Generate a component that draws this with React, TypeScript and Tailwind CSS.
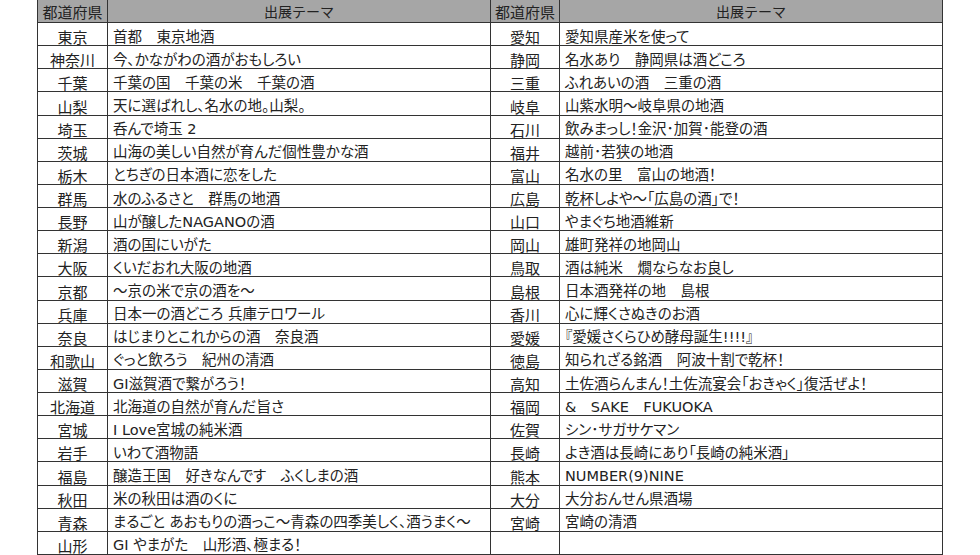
import React from "react";

const left: [string, string][] = [
  ["東京", "首都　東京地酒"],
  ["神奈川", "今、かながわの酒がおもしろい"],
  ["千葉", "千葉の国　千葉の米　千葉の酒"],
  ["山梨", "天に選ばれし、名水の地。山梨。"],
  ["埼玉", "呑んで埼玉 2"],
  ["茨城", "山海の美しい自然が育んだ個性豊かな酒"],
  ["栃木", "とちぎの日本酒に恋をした"],
  ["群馬", "水のふるさと　群馬の地酒"],
  ["長野", "山が醸したNAGANOの酒"],
  ["新潟", "酒の国にいがた"],
  ["大阪", "くいだおれ大阪の地酒"],
  ["京都", "～京の米で京の酒を～"],
  ["兵庫", "日本一の酒どころ 兵庫テロワール"],
  ["奈良", "はじまりとこれからの酒　奈良酒"],
  ["和歌山", "ぐっと飲ろう　紀州の清酒"],
  ["滋賀", "GI滋賀酒で繋がろう！"],
  ["北海道", "北海道の自然が育んだ旨さ"],
  ["宮城", "I Love宮城の純米酒"],
  ["岩手", "いわて酒物語"],
  ["福島", "醸造王国　好きなんです　ふくしまの酒"],
  ["秋田", "米の秋田は酒のくに"],
  ["青森", "まるごと あおもりの酒っこ～青森の四季美しく、酒うまく～"],
  ["山形", "GI やまがた　山形酒、極まる！"],
];

const right: [string, string][] = [
  ["愛知", "愛知県産米を使って"],
  ["静岡", "名水あり　静岡県は酒どころ"],
  ["三重", "ふれあいの酒　三重の酒"],
  ["岐阜", "山紫水明～岐阜県の地酒"],
  ["石川", "飲みまっし！金沢･加賀･能登の酒"],
  ["福井", "越前･若狭の地酒"],
  ["富山", "名水の里　富山の地酒！"],
  ["広島", "乾杯しよや～「広島の酒」で！"],
  ["山口", "やまぐち地酒維新"],
  ["岡山", "雄町発祥の地岡山"],
  ["鳥取", "酒は純米　燗ならなお良し"],
  ["島根", "日本酒発祥の地　島根"],
  ["香川", "心に輝くさぬきのお酒"],
  ["愛媛", "『愛媛さくらひめ酵母誕生!!!!』"],
  ["徳島", "知られざる銘酒　阿波十割で乾杯！"],
  ["高知", "土佐酒らんまん！土佐流宴会「おきゃく」復活ぜよ！"],
  ["福岡", "&　SAKE　FUKUOKA"],
  ["佐賀", "シン･サガサケマン"],
  ["長崎", "よき酒は長崎にあり「長崎の純米酒」"],
  ["熊本", "NUMBER(9)NINE"],
  ["大分", "大分おんせん県酒場"],
  ["宮崎", "宮崎の清酒"],
  ["", ""],
];

const font = {
  fontFamily: '"Noto Sans CJK JP", "Noto Sans", sans-serif',
};

function Pref({ text }: { text: string }) {
  return (
    <div className="flex items-end justify-center border-r border-b border-[#333] pb-[1px] text-[15px] leading-none text-[#222] overflow-hidden whitespace-nowrap">
      {text}
    </div>
  );
}

function Theme({ text }: { text: string }) {
  return (
    <div className="flex items-end justify-start border-r border-b border-[#333] pl-[5px] pb-[1px] text-[14.5px] leading-none text-[#222] overflow-hidden whitespace-nowrap [font-family:'DejaVu_Sans','Noto_Sans_CJK_JP',sans-serif] [font-feature-settings:'palt']">
      {text}
    </div>
  );
}

export default function App() {
  return (
    <div className="w-[980px] h-[555px] bg-white overflow-hidden" style={font}>
      <div className="ml-[37px] mt-[-1px] w-[906px] h-[556px] border-t border-l border-[#333] grid grid-cols-[70px_383px_69px_383px] grid-rows-[23px_repeat(23,minmax(0,1fr))]">
        <div className="flex items-center justify-center bg-[#a6a6a6] border-r border-b border-[#333] text-[15px] leading-none text-[#222]">都道府県</div>
        <div className="flex items-center justify-center bg-[#a6a6a6] border-r border-b border-[#333] text-[14px] leading-none text-[#222]">出展テーマ</div>
        <div className="flex items-center justify-center bg-[#a6a6a6] border-r border-b border-[#333] text-[15px] leading-none text-[#222]">都道府県</div>
        <div className="flex items-center justify-center bg-[#a6a6a6] border-r border-b border-[#333] text-[14px] leading-none text-[#222]">出展テーマ</div>
        {left.map((l, i) => (
          <React.Fragment key={i}>
            <Pref text={l[0]} />
            <Theme text={l[1]} />
            <Pref text={right[i][0]} />
            <Theme text={right[i][1]} />
          </React.Fragment>
        ))}
      </div>
    </div>
  );
}
